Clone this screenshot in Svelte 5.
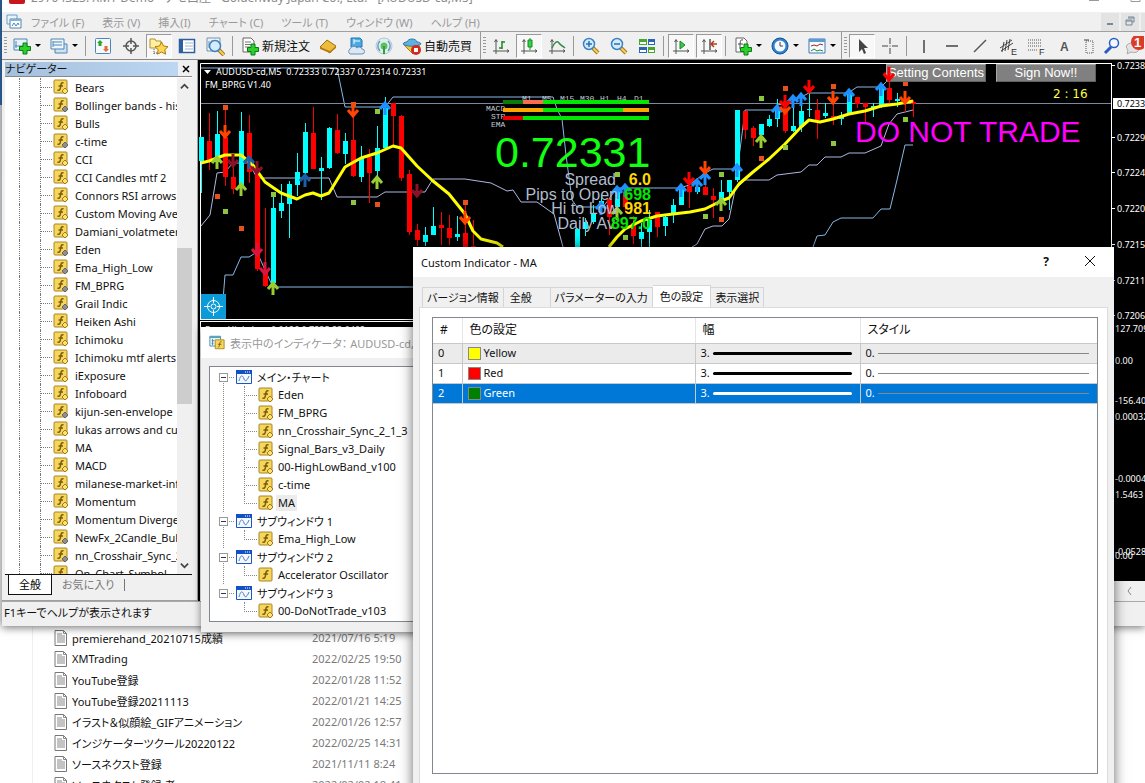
<script>
    const menus = ['ファイル (F)', '表示 (V)', '挿入(I)', 'チャート (C)', 'ツール (T)', 'ウィンドウ (W)', 'ヘルプ (H)'];

    const plus = '<path d="M11 8h4v3.500h3.500v4H15V19h-4v-3.500H7.500v-4H11z" fill="#2bd02b" stroke="#0b7a16"/>';
    const axes = '<path d="M5 4v14M2 15h16M3.500 6 5 3.500 6.500 6M16 13.500l2 1.500-2 1.500" fill="none" stroke="#555"/>';
    const lens = '<path d="m12 12 5 5" stroke="#a87812" stroke-width="4"/><path d="m12 12 5 5" stroke="#f5cf62" stroke-width="2"/><circle cx="8" cy="8" r="5.500" fill="#d5ecfc" stroke="#3b83c4" stroke-width="1.500"/>';

    const icons = {
        newChart: '<path d="M2 3h13v11H2z" fill="#e8f3fb" stroke="#4f86b5"/><path d="M4 5v7M3 10h10" stroke="#4f86b5"/><g transform="translate(0 -1)">' + plus + '</g>',
        windows: '<path d="M6 8h12v9H6z" fill="#cfe3f3" stroke="#4f86b5"/><path d="M2 3h13v10H2z" fill="#eef6fc" stroke="#4f86b5"/><path d="M4 5v6M4 6h9M4 9h9" stroke="#4f86b5"/>',
        market: '<rect x="2.500" y="2.500" width="15" height="15" rx="1" fill="#f4f9fd" stroke="#4f86b5"/><path d="m7 4 3 3H8.500v3h-3V7H4z" fill="#2aa52a"/><path d="m13 16 3-3h-1.500v-3h-3v3H10z" fill="#e66a35"/>',
        target: '<circle cx="10" cy="10" r="5" fill="none" stroke="#555" stroke-width="1.500"/><path d="M10 2v6M10 12v6M2 10h6M12 10h6" stroke="#555" stroke-width="1.500"/>',
        favorites: '<path d="M1 3h5l1 2h5v7H1z" fill="#fff1a0" stroke="#b3912c"/><path d="M5 13v5M5 17h4" stroke="#555" stroke-dasharray="1 1"/><path d="m12.500 6 2 4 4.500.700-3.200 3 .800 4.500-4.100-2.200-4.100 2.200.8-4.500-3.200-3 4.500-.7z" fill="#ffd84b" stroke="#a87a1b"/>',
        dataWindow: '<rect x="2.500" y="3.500" width="15" height="13" fill="#fff" stroke="#2d5f9e" stroke-width="1.500"/><path d="M3 4h3v12H3z" fill="#2d5f9e"/><path d="M8 7h8M8 10h8M8 13h8" stroke="#9fb6cf"/>',
        tester: '<path d="M2 2h13v13H2z" fill="#eef3f7" stroke="#7592ac"/><path d="M4 5v7M7 4v8M12 4v8" stroke="#7592ac"/><g transform="translate(2 2)">' + lens + '</g>',
        order: '<path d="M3 2h8l3 3v11H3z" fill="#fff" stroke="#666"/><path d="M5 6h6M5 8.500h6M5 11h5" stroke="#777"/>' + plus,
        gold: '<path d="m2 11 7-7 9 6-6 7z" fill="#eebc3b" stroke="#9c6c10"/><path d="m2 11 10 4 6-5v2l-6 5-10-4z" fill="#b77d15"/>',
        cloud: '<path d="M5 2h9l2 2v7H5z" fill="#48a9e3" stroke="#2176b5"/><path d="M8 3v5M8 5h6" stroke="#fff"/><path d="M4 18a3 3 0 0 1 0-5 4 4 0 0 1 7-1 3 3 0 0 1 5 1 2.500 2.500 0 0 1 0 5z" fill="#dce7f5" stroke="#6d8eb5"/>',
        signal: '<circle cx="10" cy="10" r="8" fill="#dfeff0" stroke="#b3c7d5"/><path d="M6 5a7 7 0 0 0 0 10M14 5a7 7 0 0 1 0 10" fill="none" stroke="#669bc4" stroke-width="1.500"/><circle cx="10" cy="10" r="3.500" fill="#5fc05f"/><path d="M9 10h2v8H9z" fill="#33a033"/>',
        auto: '<path d="m2 9 9 9 7-6-2-5z" fill="#f4c535" stroke="#a97a13"/><path d="M1 8c1-2 3-2 4-2 1-4 9-4 10 0 2 0 4 1 4 2-4 3-14 3-18 0z" fill="#5db0e0" stroke="#2b7cb0"/><circle cx="14" cy="14" r="5" fill="#d22a1c"/><path d="M12 12h4v4h-4z" fill="#fff"/>',
        bars: axes + '<path d="M11 5v8M11 6h3M8 12h3" stroke="#168a24" stroke-width="1.500" fill="none"/>',
        candles: axes + '<path d="M11 2v12" stroke="#168a24"/><path d="M9 4h4v7H9z" fill="#35d24a" stroke="#168a24"/>',
        line: axes + '<path d="M5 12c2-5 5-8 7-5s4 3 6 5" fill="none" stroke="#3b8a4b" stroke-width="1.500"/>',
        zoomIn: lens + '<path d="M5 8h6M8 5v6" stroke="#2770b3" stroke-width="1.500"/>',
        zoomOut: lens + '<path d="M5 8h6" stroke="#2770b3" stroke-width="1.500"/>',
        tiles: '<path d="M2 3h8v6H2zM11 11h7v6h-7z" fill="#46a82c"/><path d="M11 3h7v6h-7zM2 11h8v6H2z" fill="#2c65b5"/><path d="M3 7h6M12 7h5M3 15h6M12 15h5" stroke="#fff" stroke-width="2"/>',
        scroll: axes + '<path d="m9 5 5 4-5 4z" fill="#3cc74a" stroke="#168a24"/>',
        shift: axes + '<path d="M11 3v11" stroke="#555" stroke-width="1.500"/><path d="M18 8h-5M15 5l-3 3 3 3" stroke="#b53c1b" stroke-width="1.500" fill="none"/>',
        indicator: '<path d="M3 2h8l3 3v11H3z" fill="#fff" stroke="#666"/><path d="M10 4C7 3 7 6 7 13M5 8h5" fill="none" stroke="#444"/>' + plus,
        clock: '<circle cx="10" cy="10" r="8" fill="#2f80cf" stroke="#155293"/><circle cx="10" cy="10" r="5.500" fill="#f3f9ff"/><path d="M10 6v4h3" stroke="#444" fill="none"/>',
        template: '<path d="M2 3h16v14H2z" fill="#f7fbff" stroke="#3d79b5"/><path d="M2 3h16v3H2z" fill="#5a9ad5"/><path d="m4 10 3-1 3 1 3-2 3 1" stroke="#9b2b20" fill="none"/><path d="m4 15 3-2 3 2 3-1 3 1" stroke="#248a37" fill="none"/>',
        cursor: '<path d="M7 3v13l3-3 2 5 2-1-2-5h4z" fill="#444"/>',
        cross: '<path d="M10 2v6M10 12v6M2 10h6M12 10h6" stroke="#444"/><path d="M9.500 9.500h1v1h-1z" fill="#444"/>',
        vline: '<path d="M10 4v13" stroke="#444" stroke-width="1.500"/>',
        hline: '<path d="M4 10h12" stroke="#444" stroke-width="1.500"/>',
        trend: '<path d="M4 16 16 4" stroke="#555" stroke-width="1.500"/>',
        channel: '<path d="m2 12 12-8M3 15l12-8M6 6 4 16M9 4 7 15M12 3l-2 11" stroke="#444"/><text x="13" y="19" font-family="Liberation Sans" font-size="9" fill="#333">E</text>',
        fibo: '<path d="M2 4h14M2 7h14M2 10h14M2 14h9" stroke="#555" stroke-dasharray="1 1"/><text x="13" y="19" font-family="Liberation Sans" font-size="9" fill="#333">F</text>',
        text: '<text x="6" y="15" font-family="Liberation Sans" font-weight="bold" font-size="12" fill="#555">A</text>',
        label: '<path d="M6 5h7v12H6z" fill="none" stroke="#555" stroke-dasharray="1 1"/><path d="M4 4h5" stroke="#444"/>',
        search: '<path d="m9 11-6 6" stroke="#2a5bc4" stroke-width="3"/><circle cx="12" cy="7" r="4.500" fill="#f4f8ff" stroke="#2a5bc4" stroke-width="1.500"/>',
        chat: '<path d="M3 9c4-4 12-2 12 3s-5 5-8 4l-4 2 1-4c-2-2-2-4-1-5z" fill="#e3e3e3" stroke="#aaa"/><circle cx="15" cy="6" r="8" fill="#dc3b25"/><text x="10" y="11" font-family="Liberation Sans" font-weight="bold" font-size="13" fill="#fff">1</text>'
    };

    const toolbars = [
        [
            { icon: 'newChart', name: 'New chart', drop: true },
            { icon: 'windows', name: 'Profiles', drop: true },
            null,
            { icon: 'market', name: 'Market watch' },
            { icon: 'target', name: 'Crosshair' },
            { icon: 'favorites', name: 'Navigator', on: true },
            { icon: 'dataWindow', name: 'Terminal' },
            { icon: 'tester', name: 'Strategy tester' },
            null,
            { icon: 'order', name: 'New order', label: '新規注文' },
            { icon: 'gold', name: 'MetaEditor' },
            { icon: 'cloud', name: 'Hosting' },
            { icon: 'signal', name: 'Signals' },
            { icon: 'auto', name: 'Auto trading', label: '自動売買' }
        ],
        [
            { icon: 'bars', name: 'Bar chart' },
            { icon: 'candles', name: 'Candlesticks', on: true },
            { icon: 'line', name: 'Line chart' },
            null,
            { icon: 'zoomIn', name: 'Zoom in' },
            { icon: 'zoomOut', name: 'Zoom out' },
            { icon: 'tiles', name: 'Tile windows' },
            null,
            { icon: 'scroll', name: 'Auto scroll', on: true },
            { icon: 'shift', name: 'Chart shift', on: true },
            null,
            { icon: 'indicator', name: 'Indicators', drop: true },
            { icon: 'clock', name: 'Periods', drop: true },
            { icon: 'template', name: 'Templates', drop: true }
        ],
        [
            { icon: 'cursor', name: 'Cursor', on: true },
            { icon: 'cross', name: 'Cross' },
            null,
            { icon: 'vline', name: 'Vertical line' },
            { icon: 'hline', name: 'Horizontal line' },
            { icon: 'trend', name: 'Trend line' },
            { icon: 'channel', name: 'Channel' },
            { icon: 'fibo', name: 'Fibonacci' },
            { icon: 'text', name: 'Text' }
        ],
    ];
    const rightTools = [
        { icon: 'label', name: 'Label' },
        { icon: 'search', name: 'Search' },
        { icon: 'chat', name: 'Messages' }
    ];

    // grey: the indicator ships without source
    const navItems = [
        ['Bears'], ['Bollinger bands - histo', 1], ['Bulls'], ['c-time', 1], ['CCI'], ['CCI Candles mtf 2'],
        ['Connors RSI arrows'], ['Custom Moving Average'], ['Damiani_volatmeter'], ['Eden', 1],
        ['Ema_High_Low', 1], ['FM_BPRG', 1], ['Grail Indic', 1], ['Heiken Ashi'], ['Ichimoku'],
        ['Ichimoku mtf alerts'], ['iExposure'], ['Infoboard'], ['kijun-sen-envelope', 1],
        ['lukas arrows and curves'], ['MA'], ['MACD'], ['milanese-market-info'], ['Momentum'],
        ['Momentum Divergence'], ['NewFx_2Candle_Bull', 1], ['nn_Crosshair_Sync_2', 1], ['On_Chart_Symbol']
    ];

    const tree = [
        { name: 'メイン・チャート', items: ['Eden', 'FM_BPRG', 'nn_Crosshair_Sync_2_1_3', 'Signal_Bars_v3_Daily', '00-HighLowBand_v100', 'c-time', 'MA'] },
        { name: 'サブウィンドウ 1', items: ['Ema_High_Low'] },
        { name: 'サブウィンドウ 2', items: ['Accelerator Oscillator'] },
        { name: 'サブウィンドウ 3', items: ['00-DoNotTrade_v103'] }
    ];
    let picked = $state('MA');

    const files = [
        ['premierehand_20210715成績', '2021/07/16 5:19'],
        ['XMTrading', '2022/02/25 19:50'],
        ['YouTube登録', '2022/01/28 11:52'],
        ['YouTube登録20211113', '2022/01/21 14:25'],
        ['イラスト＆似顔絵_GIFアニメーション', '2022/01/26 12:57'],
        ['インジケーターツクール20220122', '2022/02/25 14:31'],
        ['ソースネクスト登録', '2021/11/11 8:24'],
        ['ソースネクスト登録 者', '2022/02/02 18:41']
    ];

    const tabs = ['バージョン情報', '全般', 'パラメーターの入力', '色の設定', '表示選択'];
    let tab = $state(3);
    const levels = [['Yellow', '#ffff00'], ['Red', '#ff0000'], ['Green', '#008000']];
    let level = $state(2);

    // x, high, low, top, bottom, 1 = up
    const candles = [
        [201, 137, 193, 137, 161, 1], [209, 113, 170, 141, 161, 0], [217, 111, 169, 134, 162, 1], [225, 107, 186, 137, 177, 0],
        [233, 163, 194, 177, 189, 0], [241, 112, 190, 131, 185, 1], [249, 115, 183, 133, 172, 0], [257, 163, 271, 168, 269, 0],
        [265, 208, 287, 270, 286, 0], [273, 197, 285, 208, 283, 1], [281, 184, 218, 203, 211, 1], [289, 181, 238, 184, 204, 1],
        [297, 153, 196, 172, 185, 1], [305, 123, 183, 132, 173, 1], [313, 107, 169, 133, 169, 0], [321, 157, 200, 168, 171, 1],
        [329, 127, 169, 128, 168, 1], [337, 114, 154, 130, 153, 0], [345, 133, 164, 141, 154, 1], [353, 103, 177, 140, 176, 0],
        [361, 146, 182, 158, 177, 1], [369, 149, 203, 157, 173, 0], [377, 126, 177, 148, 171, 1], [385, 97, 149, 108, 148, 1],
        [393, 103, 147, 103, 116, 0], [401, 115, 181, 116, 178, 0], [409, 170, 235, 174, 232, 0], [417, 224, 246, 230, 240, 0],
        [425, 227, 246, 235, 242, 1], [433, 207, 235, 226, 235, 1], [441, 212, 245, 225, 228, 0], [449, 215, 245, 228, 238, 0],
        [457, 216, 241, 234, 237, 1], [465, 200, 250, 233, 250, 0], [473, 220, 250, 246, 250, 0], [577, 229, 250, 229, 250, 1],
        [585, 218, 236, 222, 229, 1], [593, 205, 224, 214, 222, 1], [601, 196, 212, 201, 208, 1], [609, 199, 235, 199, 217, 0],
        [617, 187, 218, 190, 207, 1], [625, 187, 212, 192, 207, 0], [633, 216, 244, 223, 236, 0], [641, 223, 250, 232, 239, 1],
        [649, 210, 250, 220, 232, 1], [657, 212, 237, 212, 227, 0], [665, 215, 236, 217, 226, 1], [673, 199, 223, 205, 213, 1],
        [681, 184, 205, 187, 205, 1], [689, 180, 208, 186, 192, 0], [697, 182, 194, 187, 192, 1], [705, 173, 195, 187, 195, 0],
        [713, 188, 218, 196, 200, 0], [721, 180, 210, 192, 199, 1], [729, 180, 210, 180, 192, 1], [737, 110, 182, 110, 180, 1],
        [745, 111, 139, 111, 130, 0], [753, 126, 146, 128, 138, 0], [761, 124, 136, 124, 135, 1], [769, 115, 127, 119, 126, 1],
        [777, 99, 127, 110, 119, 1], [785, 106, 133, 112, 131, 0], [793, 103, 132, 126, 131, 1], [801, 100, 132, 111, 127, 1],
        [809, 93, 117, 109, 110, 1], [817, 99, 139, 110, 120, 0], [825, 103, 118, 113, 116, 1], [833, 103, 125, 116, 119, 0],
        [841, 112, 125, 117, 119, 1], [849, 91, 114, 93, 113, 1], [857, 97, 108, 97, 104, 0], [865, 103, 122, 103, 107, 0],
        [873, 103, 117, 106, 108, 1], [881, 85, 108, 88, 107, 1], [889, 82, 105, 88, 100, 0], [897, 93, 107, 99, 101, 1],
        [905, 100, 112, 101, 103, 0], [913, 100, 117, 102, 104, 0]
    ];

    const bands = [
        '201,68 337,68 345,107 385,107 393,97 553,97 557,109 562,119 566,155 572,200 577,207 603,207 617,188 680,188 689,185 705,173 713,169 737,169 740,150 745,110 773,110 777,105 789,103 801,97 809,93 848,93 857,87 881,87 889,79 897,69 905,66',
        '223,300 225,275 233,275 241,257 249,257 257,252 265,270 273,287 413,287',
        '813,247 817,236 825,235 833,222 841,218 873,218 881,209 890,209 897,180 905,145 913,145',
        '201,226 210,215 217,173 225,172 233,163 249,163 257,178 329,178 337,197 377,197 385,192 425,192 433,179 465,179 491,183 507,191 513,190 521,202 537,202 554,214 563,247',
        '692,247 697,244 705,229 713,226 722,226 729,219 735,190 745,180 769,180 777,175 801,172 809,165 817,165 825,157 841,157 849,153 865,153 881,146 889,124 897,114 905,112 913,110'
    ];
    const averages = [
        '201,163 209,161 225,155 241,155 253,165 265,182 281,193 297,199 305,195 313,193 321,196 329,193 337,180 345,167 361,158 377,153 393,146 401,148 417,166 433,181 449,194 465,214 473,231 481,239 497,243 503,247',
        '609,247 617,237 625,229 641,221 657,216 673,214 690,212 705,209 721,201 729,198 739,184 753,172 769,159 785,144 801,127 809,120 820,122 833,119 849,114 865,111 881,106 897,104 913,101'
    ];

    // tip of each arrow
    const upArrows = [
        ['#9acd32', [[217, 155], [241, 182], [273, 281], [377, 175], [761, 134], [721, 197], [617, 206]]],
        ['#1a5fa8', [[249, 155], [305, 173]]],
        ['#1e90ff', [[385, 101], [681, 183], [697, 178], [705, 171], [737, 163], [777, 104], [793, 94], [801, 92], [849, 88], [881, 82], [601, 201], [617, 185], [625, 183]]]
    ];
    const downArrows = [
        ['#ff4500', [[225, 139], [353, 118], [465, 225], [705, 175], [785, 115], [833, 105], [905, 105]]],
        ['#8b1028', [[233, 168], [257, 175], [417, 198]]],
        ['#dc143c', [[257, 257], [265, 276]]],
        ['#ff0000', [[689, 186], [809, 94], [785, 109], [889, 81]]]
    ];
    const marks = [
        ['#e8501c', [[225, 107], [217, 196], [241, 228], [353, 104], [377, 204], [465, 202], [785, 88], [833, 86], [761, 158], [721, 219], [905, 83]]],
        ['#8dc63f', [[225, 211], [273, 194], [353, 202], [377, 111], [617, 174], [625, 237], [705, 216], [721, 174], [761, 98], [785, 147], [833, 143], [905, 119]]]
    ];

    const signals = [
        [102, [[503, 20, '#0a7a0a'], [523, 20, '#fa6b50'], [543, 106, '#00e800']]],
        [110, [[503, 40, '#ffa500'], [543, 80, '#00e800'], [623, 26, '#ffa500']]],
        [118, [[503, 20, '#e80000'], [523, 126, '#00e800']]]
    ];
    const frames = [['M1', 522], ['M5', 542], ['M15', 560], ['M30', 580], ['H1', 600], ['H4', 617], ['D1', 634]];
    const stats = [
        ['Spread', '6.0', '#ffd700', 185, 616], ['Pips to Open', '698', '#00e800', 200, 618],
        ['Hi to Low', '981', '#ffd700', 214, 618], ['Daily Av', '897.0', '#00e800', 229, 615]
    ];
    const prices = [['0.7238', 65], ['0.7229', 137], ['0.7224', 172], ['0.7220', 208], ['0.7215', 244], ['0.7211', 280], ['0.7206', 315]];
    const scales = [['127.709', 329], ['0.00', 361], ['-156.40', 401], ['0.00032', 417], ['-0.00043', 479], ['1.5463', 495], ['-0.0528', 552], ['0.00', 556]];
</script>

{#snippet fx(mark)}
    <svg class="fx" viewBox="0 0 16 16" aria-hidden="true">
        <rect x="1" y="1" width="13" height="13" rx="1" fill="#f6d75e" stroke="#a98420" />
        <path d="M10.500 4C8.500 3 8 4.500 7.700 7S7 12 4.500 11M5.500 7h4.500" fill="none" stroke="#7c5a08" stroke-width="1.500" />
        {#if mark}
            <path d="m12 9 3 3-3 3-3-3z" fill={mark === 'grey' ? '#8f8f8f' : '#ffe26a'} stroke={mark === 'grey' ? '#666' : '#a07c1c'} />
        {/if}
    </svg>
{/snippet}

{#snippet tool(t)}
    <button class="tool" class:on={t.on} class:drop={t.drop} aria-label={t.name}>
        <svg viewBox="0 0 20 20" aria-hidden="true">{@html icons[t.icon]}</svg>
        {#if t.label}<span>{t.label}</span>{/if}
        {#if t.drop}<i class="caret"></i>{/if}
    </button>
{/snippet}

<div class="desktop">
    <section class="explorer">
        <ul>
            {#each files as [name, date]}
                <li>
                    <svg class="doc" viewBox="0 0 14 16" aria-hidden="true">
                        <path d="M1 .5h8.500l3 3v12H1z" fill="#fff" stroke="#777" />
                        <path d="M9.500.5v3h3M3 4h5M3 6h8M3 8h8M3 10h8M3 12h8" fill="none" stroke="#888" />
                    </svg>
                    <span class="file">{name}</span>
                    <time>{date}</time>
                </li>
            {/each}
        </ul>
    </section>

    <main class="terminal">
        <header class="titlebar">
            <i class="logo"></i>
            <span>29704323: XMT-Demo - デモ口座 - Goldenway Japan Co., Ltd. - [AUDUSD-cd,M5]</span>
            <svg class="caption" viewBox="0 0 60 12" aria-hidden="true">
                <path d="M4 9.500h10M46 1.500h9v9h-9z" fill="none" stroke="#999" />
            </svg>
        </header>

        <nav class="menubar">
            <svg class="menu-icon" viewBox="0 0 16 16" aria-hidden="true">
                <path d="M1 1h10v9H1z" fill="#eaf3fa" stroke="#6b9cc6" />
                <path d="M4 5h11v9H4z" fill="#fff" stroke="#4f86b5" />
                <path d="M4 5h11v2H4z" fill="#7fb2da" />
                <path d="m6 12 2-3 2 3 2-3 1 2" fill="none" stroke="#4f86b5" />
            </svg>
            {#each menus as item}
                <button class="menu">{item}</button>
            {/each}
            <div class="mdi">
                <button aria-label="Minimize"><svg viewBox="0 0 10 10"><path d="M2 8h6" stroke="#789" stroke-width="2" /></svg></button>
                <button aria-label="Restore"><svg viewBox="0 0 10 10"><path d="M3 1h6v5H7M1 4h6v5H1zM1 5h6M3 2h6" fill="none" stroke="#789" /></svg></button>
                <button aria-label="Close"></button>
            </div>
        </nav>

        <div class="toolbar">
            {#each toolbars as bar}
                <div class="group">
                    <i class="grip"></i>
                    {#each bar as t}
                        {#if t}
                            {@render tool(t)}
                        {:else}
                            <i class="sep"></i>
                        {/if}
                    {/each}
                </div>
            {/each}
            <div class="right-tools">
                {#each rightTools as t}
                    {@render tool(t)}
                {/each}
            </div>
        </div>

        <div class="workspace">
            <aside class="navigator">
                <header>
                    <span>ナビゲーター</span>
                    <button aria-label="Close navigator">
                        <svg viewBox="0 0 8 8"><path d="m1 1 6 6M7 1 1 7" stroke="#000" stroke-width="1.500" /></svg>
                    </button>
                </header>
                <div class="nav-box">
                    <ul>
                        {#each navItems as [name, grey]}
                            <li>
                                <i class="trunk"></i>
                                <i class="branch"></i>
                                {@render fx(grey ? 'grey' : 'gold')}
                                <span>{name}</span>
                            </li>
                        {/each}
                    </ul>
                    <div class="scrollbar">
                        <svg viewBox="0 0 10 10"><path d="m1 7 4-4 4 4" fill="none" stroke="#444" stroke-width="2" /></svg>
                        <i class="thumb"></i>
                        <svg viewBox="0 0 10 10"><path d="m1 3 4 4 4-4" fill="none" stroke="#444" stroke-width="2" /></svg>
                    </div>
                </div>
                <div class="nav-tabs">
                    <button class="current">全般</button>
                    <button>お気に入り</button>
                </div>
            </aside>

            <div class="chart">
                <div class="plot">
                    <svg class="canvas" aria-label="AUDUSD-cd M5">
                        <g transform="translate(-198 -60)">
                            <path d="M200.500 320V63.500h1200M200 319.500h1200M200 321.500h1200M200.500 321v280" fill="none" stroke="#fff" />
                            {#each bands as points, i}
                                <polyline {points} fill="none" stroke={i < 3 ? '#87b8e8' : '#b0b8e0'} />
                            {/each}
                            <path d="M201 103.500h1200" stroke="#8088a0" />
                            {#each candles as [x, high, low, top, bottom, up]}
                                <path d="M{x + 0.5} {high}V{low}" stroke={up ? '#00ffff' : '#ff0000'} />
                                <rect x={x - 2} y={top} width="5" height={bottom - top} fill={up ? '#00ffff' : '#ff0000'} />
                            {/each}
                            {#each averages as points}
                                <polyline {points} fill="none" stroke="#ffff00" stroke-width="3" stroke-linejoin="round" />
                            {/each}
                            {#each marks as [color, list]}
                                {#each list as [x, y]}
                                    <rect x={x - 2} y={y - 2} width="5" height="5" fill={color} />
                                {/each}
                            {/each}
                            {#each upArrows as [color, list]}
                                {#each list as [x, y]}
                                    <path d="M{x} {y + 14}V{y + 2}M{x - 5} {y + 8}l5-6 5 6" fill="none" stroke={color} stroke-width="3" />
                                {/each}
                            {/each}
                            {#each downArrows as [color, list]}
                                {#each list as [x, y]}
                                    <path d="M{x} {y - 14}V{y - 2}M{x - 5} {y - 8}l5 6 5-6" fill="none" stroke={color} stroke-width="3" />
                                {/each}
                            {/each}

                            <path d="M204 70h7l-3.500 4z" fill="#fff" />
                            <g class="label">
                                <text x="216" y="75">AUDUSD-cd,M5&nbsp; 0.72333 0.72337 0.72314 0.72331</text>
                                <text x="205" y="88">FM_BPRG V1.40</text>
                                <text x="205" y="333">Ema_High_Low 0.0186 0.7235 23.0402</text>
                            </g>

                            <g class="tiny">
                                {#each frames as [name, x]}
                                    <text {x} y="101">{name}</text>
                                {/each}
                                <text x="486" y="111">MACD</text>
                                <text x="491" y="119">STR</text>
                                <text x="491" y="127">EMA</text>
                            </g>
                            {#each signals as [y, parts]}
                                {#each parts as [x, w, color]}
                                    <rect {x} y={y - 2} width={w} height="4" fill={color} />
                                {/each}
                            {/each}

                            <text class="quote" x="495" y="167">0.72331</text>
                            {#each stats as [name, value, color, y, end]}
                                <text class="stat" x={end} {y}>{name}</text>
                                <text class="stat value" x="651" {y} fill={color}>{value}</text>
                            {/each}
                            <text class="warning" x="855" y="142">DO NOT TRADE</text>
                            <text class="timer" x="1053" y="98">2 : 16</text>

                            <path d="M201 294h25v25h-25z" fill="#0a9bd8" />
                            <g fill="none" stroke="#fff">
                                <circle cx="213.500" cy="306.500" r="6" />
                                <circle cx="213.500" cy="306.500" r="2.500" />
                                <path d="M213.500 297v6M213.500 310v6M204 306.500h6M217 306.500h6" />
                            </g>
                        </g>
                    </svg>
                    <div class="promo">
                        <button>Setting Contents</button>
                        <button>Sign Now!!</button>
                    </div>
                    <!-- the sell signal runs over the first button -->
                    <svg class="over" viewBox="0 0 12 16" aria-hidden="true">
                        <path d="M6 0v13M1 7l5 6 5-6" fill="none" stroke="#f00" stroke-width="3" />
                    </svg>
                </div>
                <svg class="axis" aria-label="Price scale">
                    <g transform="translate(-1111 -60)">
                        <path d="M1111.500 63v538" stroke="#fff" />
                        {#each prices as [value, y]}
                            <path d="M1112 {y + 0.5}h3" stroke="#fff" />
                            <text x="1117" y={y + 4}>{value}</text>
                        {/each}
                        <path d="M1113 98h40v11h-40z" fill="#fff" />
                        <text class="bid" x="1117" y="107">0.7233</text>
                        {#each scales as [value, y]}
                            <text x="1115" y={y + 3}>{value}</text>
                        {/each}
                        <path d="M1111 581h40v20h-40z" fill="#f0f0f0" />
                        <path d="m1131 587-3 4 3 4" fill="none" stroke="#888" />
                    </g>
                </svg>
            </div>
        </div>

        <footer class="status">F1キーでヘルプが表示されます</footer>
    </main>

    <section class="indicators">
        <header>
            <svg viewBox="0 0 18 16" aria-hidden="true">
                <path d="M1 1h12v11H1z" fill="#eef6fb" stroke="#3f85a8" />
                <path d="M1 1h12v2H1z" fill="#55a2bd" />
                <path d="M4 4v7M3 6h3M3 9h2" stroke="#3f85a8" />
                <path d="M7 5h10v10H7z" fill="#f6d75e" stroke="#a98420" />
                <path d="M14 7c-3-1-1 7-4 6M10 10h4" fill="none" stroke="#7c5a08" />
            </svg>
            <span>表示中のインディケータ： AUDUSD-cd,M5</span>
        </header>
        <ul class="tree">
            {#each tree as node}
                <li>
                    <div class="node">
                        <i class="expander"></i>
                        <svg viewBox="0 0 16 14" aria-hidden="true">
                            <path d="M.5.5h15v13H.5z" fill="#f4f9ff" stroke="#1c56c0" />
                            <path d="M0 0h16v4H0z" fill="#1350c8" />
                            <path d="M9 2h1M11 2h1M13 2h1" stroke="#fff" />
                            <path d="M3 11c2-8 4-5 5-2s3 2 5-3" fill="none" stroke="#4b78c4" />
                        </svg>
                        <span>{node.name}</span>
                    </div>
                    <ul>
                        {#each node.items as item}
                            <li class="leaf">
                                {@render fx(item.startsWith('Accel') ? '' : 'gold')}
                                <button class:picked={picked === item} onclick={() => (picked = item)}>{item}</button>
                            </li>
                        {/each}
                    </ul>
                </li>
            {/each}
        </ul>
    </section>

    <section class="dialog">
        <header>
            <h1>Custom Indicator - MA</h1>
            <button aria-label="Help">?</button>
            <button aria-label="Close">
                <svg viewBox="0 0 12 12"><path d="m1 1 10 10M11 1 1 11" stroke="#111" /></svg>
            </button>
        </header>
        <div class="dialog-tabs">
            {#each tabs as name, i}
                <button class:active={tab === i} onclick={() => (tab = i)}>{name}</button>
            {/each}
        </div>
        <div class="page">
            <div class="grid">
                <table>
                    <thead>
                        <tr><th class="num">#</th><th class="color">色の設定</th><th class="width">幅</th><th>スタイル</th></tr>
                    </thead>
                    <tbody>
                        {#each levels as [name, color], i}
                            <tr class:selected={level === i} onclick={() => (level = i)}>
                                <td>{i}</td>
                                <td><div class="cell"><i class="swatch" style="background: {color}"></i>{name}</div></td>
                                <td><div class="cell">3.<i class="thick"></i></div></td>
                                <td><div class="cell">0.<i class="thin"></i></div></td>
                            </tr>
                        {/each}
                    </tbody>
                </table>
            </div>
        </div>
    </section>
</div>

<style>
    :global(body) {
        margin: 0;
        overflow: hidden;
    }

    .desktop {
        position: relative;
        height: 100vh;
        overflow: hidden;
        background: linear-gradient(#2f6cab 105px, #d8dce0 105px, #eee 620px, #fff 627px);
        font-family: 'Noto Sans', 'Noto Sans CJK JP', sans-serif;
        font-size: 11px;
        font-feature-settings: 'palt';
        color: #111;
    }

    button {
        margin: 0;
        padding: 0;
        border: 0;
        background: none;
        font: inherit;
        font-feature-settings: inherit;
        color: inherit;
    }

    ul {
        margin: 0;
        padding: 0;
        list-style: none;
    }

    li,
    span {
        white-space: nowrap;
    }

    svg,
    i {
        flex: none;
    }

    /* file explorer behind */
    .explorer {
        position: absolute;
        top: 627px;
        left: 0;
        right: 0;
        bottom: 0;
        background: #fff;
    }

    .explorer ul {
        margin-left: 32px;
        padding-left: 21px;
        border-left: 1px solid #eee;
    }

    .explorer li {
        display: flex;
        align-items: center;
        height: 21px;
    }

    .doc {
        width: 14px;
        height: 16px;
        margin-right: 4px;
    }

    .file {
        width: 240px;
    }

    time {
        color: #7a7a7a;
    }

    /* terminal window */
    .terminal {
        position: absolute;
        top: -19px;
        left: 2px;
        right: 0;
        height: 645px;
        display: flex;
        flex-direction: column;
        background: #f0f0f0;
        box-shadow: 0 2px 8px rgba(0, 0, 0, 0.5);
    }

    .titlebar {
        display: flex;
        align-items: center;
        height: 31px;
        padding-left: 7px;
        background: #fff;
        font-size: 12px;
        color: #8a8a8a;
    }

    .logo {
        width: 16px;
        height: 14px;
        margin-right: 6px;
        border-radius: 2px;
        background: #c8161d;
    }

    .caption {
        width: 60px;
        height: 12px;
        margin-left: auto;
    }

    .menubar {
        display: flex;
        align-items: center;
        box-sizing: border-box;
        height: 20px;
        padding-left: 4px;
        border-bottom: 1px solid #a0a0a0;
        color: #999;
    }

    .menu-icon {
        width: 16px;
        height: 16px;
    }

    .menu {
        padding: 0 9px;
        white-space: nowrap;
    }

    .mdi {
        display: flex;
        gap: 2px;
        margin-left: auto;
    }

    .mdi button {
        width: 18px;
        height: 18px;
        background: #e3e3e3;
    }

    .mdi button:last-child {
        width: 4px;
    }

    .mdi svg {
        width: 10px;
        height: 10px;
    }

    .toolbar {
        display: flex;
        height: 27px;
        overflow: hidden;
        border-bottom: 1px solid #888;
    }

    .group {
        display: flex;
        align-items: center;
        padding-right: 4px;
        border-right: 1px solid #999;
    }

    .group:nth-child(2) {
        padding-right: 1px;
    }

    .group:nth-child(3) {
        padding: 0;
        border: 0;
    }

    .grip {
        width: 3px;
        height: 18px;
        margin: 0 1px 0 2px;
        background: repeating-linear-gradient(#999 0 1px, #f0f0f0 1px 3px);
    }

    .sep {
        width: 1px;
        height: 20px;
        margin: 0 3px 0 2px;
        background: #999;
    }

    .group:first-child .sep {
        margin-left: 3px;
    }

    .tool {
        display: flex;
        align-items: center;
        justify-content: center;
        box-sizing: border-box;
        width: 26px;
        height: 24px;
        margin: 0 1px;
        border: 1px solid transparent;
        font-size: 12px;
        white-space: nowrap;
    }

    .tool svg {
        width: 20px;
        height: 20px;
    }

    .tool.drop {
        width: 35px;
    }

    .tool:has(span) {
        width: 76px;
        gap: 2px;
    }

    .tool.on {
        border-color: #999 #fff #fff #999;
        background: #f8f8f8;
    }

    .caret {
        margin-left: 3px;
        border: 3px solid transparent;
        border-top-color: #000;
        border-bottom: 0;
    }

    .right-tools {
        display: flex;
        align-items: center;
        margin-left: auto;
    }

    .right-tools .tool {
        width: 20px;
    }

    .workspace {
        display: flex;
        flex: 1;
        min-height: 0;
    }

    .navigator {
        display: flex;
        flex-direction: column;
        box-sizing: border-box;
        width: 196px;
        padding: 2px 3px 5px;
        border-right: 1px solid #a0a0a0;
        border-bottom: 1px solid #a0a0a0;
    }

    .navigator header {
        display: flex;
        align-items: center;
        height: 14px;
    }

    .navigator header span {
        width: 173px;
        line-height: 14px;
        background: linear-gradient(90deg, #a5c0dd, #bdd6f1);
    }

    .navigator header button {
        flex: 1;
        line-height: 8px;
    }

    .navigator header svg {
        width: 8px;
        height: 8px;
    }

    .nav-box {
        display: flex;
        flex: 1;
        min-height: 0;
        margin-right: 2px;
        padding-top: 1px;
        border-top: 1px solid #888;
        border-bottom: 1px solid #111;
        background: #fff;
    }

    .nav-box ul {
        flex: 1;
        min-width: 0;
        overflow: hidden;
    }

    .nav-box li {
        display: flex;
        align-items: center;
        height: 18px;
    }

    .trunk {
        width: 20px;
        height: 18px;
        margin-left: 14px;
        border-left: 1px dotted #777;
    }

    .branch {
        width: 11px;
        height: 18px;
        border-left: 1px dotted #777;
        background: repeating-linear-gradient(90deg, #777 0 1px, #fff 1px 2px) 0 9px / 100% 1px no-repeat;
    }

    .fx {
        width: 16px;
        height: 16px;
        margin: 0 6px 0 1px;
    }

    .scrollbar {
        display: flex;
        flex-direction: column;
        align-items: center;
        width: 15px;
        padding: 4px 0;
        background: #f0f0f0;
    }

    .scrollbar svg {
        width: 9px;
        height: 9px;
    }

    .thumb {
        width: 15px;
        height: 156px;
        margin: auto 0;
        background: #cdcdcd;
    }

    .nav-tabs {
        display: flex;
        height: 20px;
        padding-left: 3px;
    }

    .nav-tabs button {
        padding: 0 10px;
        border-right: 1px solid #777;
        margin: 4px 0;
        line-height: 12px;
        color: #777;
    }

    .nav-tabs .current {
        margin: 0;
        border: 1px solid #111;
        border-top: 0;
        background: #fff;
        color: #000;
    }

    .status {
        box-sizing: border-box;
        height: 25px;
        padding-left: 2px;
        border-top: 1px solid #aaa;
        line-height: 22px;
    }

    /* chart window */
    .chart {
        display: flex;
        flex: 1;
        min-width: 0;
        background: #000;
    }

    .plot {
        position: relative;
        flex: 1;
        min-width: 0;
        overflow: hidden;
    }

    .canvas {
        display: block;
        width: 100%;
        height: 100%;
    }

    .axis {
        width: 34px;
        height: 100%;
    }

    .axis text,
    .label text {
        font-size: 9px;
        fill: #fff;
    }

    .axis .bid {
        fill: #000;
    }

    .tiny text {
        font-family: 'Liberation Mono', monospace;
        font-size: 8px;
        fill: #c0c8d8;
    }

    .quote {
        font-family: 'Liberation Sans', sans-serif;
        font-size: 43px;
        fill: #11ff11;
    }

    .stat {
        font-family: 'Liberation Sans', sans-serif;
        font-size: 16px;
        text-anchor: end;
    }

    .stat:not(.value) {
        fill: #b0bccd;
    }

    .value {
        font-weight: bold;
    }

    .warning {
        font-family: 'Liberation Sans', sans-serif;
        font-size: 30px;
        fill: #ff00ff;
    }

    .timer {
        font-family: 'DejaVu Sans', sans-serif;
        font-size: 12px;
        fill: #ffff40;
    }

    .promo {
        position: absolute;
        top: 4px;
        right: 15px;
        display: flex;
        gap: 10px;
    }

    .promo button {
        box-sizing: border-box;
        width: 100px;
        height: 18px;
        border: 1px solid #a8a8a8;
        border-right-color: #606060;
        border-bottom-color: #606060;
        background: #808080;
        font-family: 'Liberation Sans', sans-serif;
        font-size: 13px;
        line-height: 16px;
        color: #fff;
        white-space: nowrap;
    }

    .over {
        position: absolute;
        top: 7px;
        right: 216px;
        width: 12px;
        height: 16px;
    }

    /* indicator list window */
    .indicators {
        position: absolute;
        top: 327px;
        left: 201px;
        width: 300px;
        box-sizing: border-box;
        padding: 0 8px 10px;
        background: #f0f0f0;
        box-shadow: 0 2px 8px rgba(0, 0, 0, 0.5);
    }

    .indicators header {
        display: flex;
        align-items: center;
        gap: 5px;
        height: 31px;
        margin: 0 -8px 8px;
        padding-left: 8px;
        background: #fff;
        color: #999;
    }

    .indicators header svg {
        width: 16px;
        height: 15px;
    }

    .tree {
        padding: 1px 0 1px 9px;
        border: 1px solid #828790;
        background: #fff;
    }

    .node,
    .leaf {
        display: flex;
        align-items: center;
        height: 18px;
    }

    .tree > li {
        background: repeating-linear-gradient(#888 0 1px, #fff 1px 2px) 4px 9px / 1px 100% no-repeat;
    }

    .tree > li:last-child {
        background: none;
    }

    .node {
        background: repeating-linear-gradient(90deg, #888 0 1px, #fff 1px 2px) 10px 9px / 6px 1px no-repeat;
    }

    .expander {
        box-sizing: border-box;
        width: 9px;
        height: 9px;
        margin-right: 8px;
        border: 1px solid #999;
        background: linear-gradient(#335, #335) center / 5px 1px no-repeat #fff;
    }

    .node svg {
        width: 16px;
        height: 14px;
        margin-right: 5px;
    }

    .leaf::before {
        content: '';
        width: 12px;
        height: 9px;
        margin: 0 0 9px 25px;
        border: 1px dotted #888;
        border-width: 0 0 1px 1px;
    }

    .leaf:not(:last-child) {
        background: repeating-linear-gradient(#888 0 1px, #fff 1px 2px) 25px 9px / 1px 9px no-repeat;
    }

    .leaf .fx {
        margin-right: 2px;
    }

    .leaf button {
        height: 16px;
        padding: 0 2px;
        line-height: 16px;
    }

    .leaf .picked {
        background: #ececec;
    }

    /* properties dialog */
    .dialog {
        position: absolute;
        top: 247px;
        left: 413px;
        right: 31px;
        bottom: -20px;
        display: flex;
        flex-direction: column;
        background: #f0f0f0;
        box-shadow: 0 0 12px rgba(0, 0, 0, 0.6);
    }

    .dialog header {
        display: flex;
        align-items: center;
        height: 30px;
        padding: 0 2px 0 8px;
        background: #fff;
    }

    .dialog h1 {
        flex: 1;
        margin: 0;
        font-size: 11px;
        font-weight: normal;
    }

    .dialog header button {
        width: 44px;
        font-size: 12px;
        font-weight: bold;
        line-height: 12px;
    }

    .dialog header svg {
        width: 12px;
        height: 12px;
    }

    .dialog-tabs {
        display: flex;
        align-items: flex-end;
        height: 30px;
        padding-left: 9px;
    }

    .dialog-tabs button {
        height: 20px;
        padding: 0 4px;
        border: 1px solid #d5d5d5;
        border-bottom: 0;
        border-left-width: 0;
        line-height: 18px;
        white-space: nowrap;
    }

    .dialog-tabs button:first-child {
        border-left-width: 1px;
    }

    .dialog-tabs button:nth-child(2) {
        padding: 0 18px 0 6px;
    }

    .dialog-tabs .active {
        height: 22px;
        padding: 0 7px;
        background: #fff;
    }

    .page {
        display: flex;
        flex: 1;
        margin: 0 6px 4px;
        padding: 9px 9px 24px 12px;
        border: 1px solid #dcdcdc;
        background: #fff;
    }

    .grid {
        flex: 1;
        border: 1px solid #828790;
    }

    table {
        width: 100%;
        border-collapse: collapse;
        table-layout: fixed;
    }

    th,
    td {
        box-sizing: border-box;
        height: 20px;
        padding: 0 8px 0 5px;
        border: 0 solid #c8c8c8;
        border-width: 0 0 1px 1px;
        text-align: left;
        font-weight: normal;
        line-height: 18px;
    }

    th {
        height: 25px;
        padding-left: 7px;
        border-left-color: #e5e5e5;
        font-size: 12px;
    }

    th:first-child,
    td:first-child {
        border-left: 0;
    }

    .num {
        width: 29px;
    }

    .color {
        width: 233px;
    }

    .width {
        width: 165px;
    }

    tbody tr:first-child {
        background: #ebebeb;
    }

    tbody tr.selected {
        background: #0078d7;
        color: #fff;
    }

    .cell {
        display: flex;
        align-items: center;
        gap: 3px;
    }

    .swatch {
        box-sizing: border-box;
        width: 13px;
        height: 13px;
        border: 1px solid #888;
    }

    .thick {
        flex: 1;
        height: 3px;
        border-radius: 2px;
        background: #000;
    }

    .selected .thick {
        background: #fff;
    }

    .thin {
        flex: 1;
        height: 1px;
        background: #888;
    }
</style>
